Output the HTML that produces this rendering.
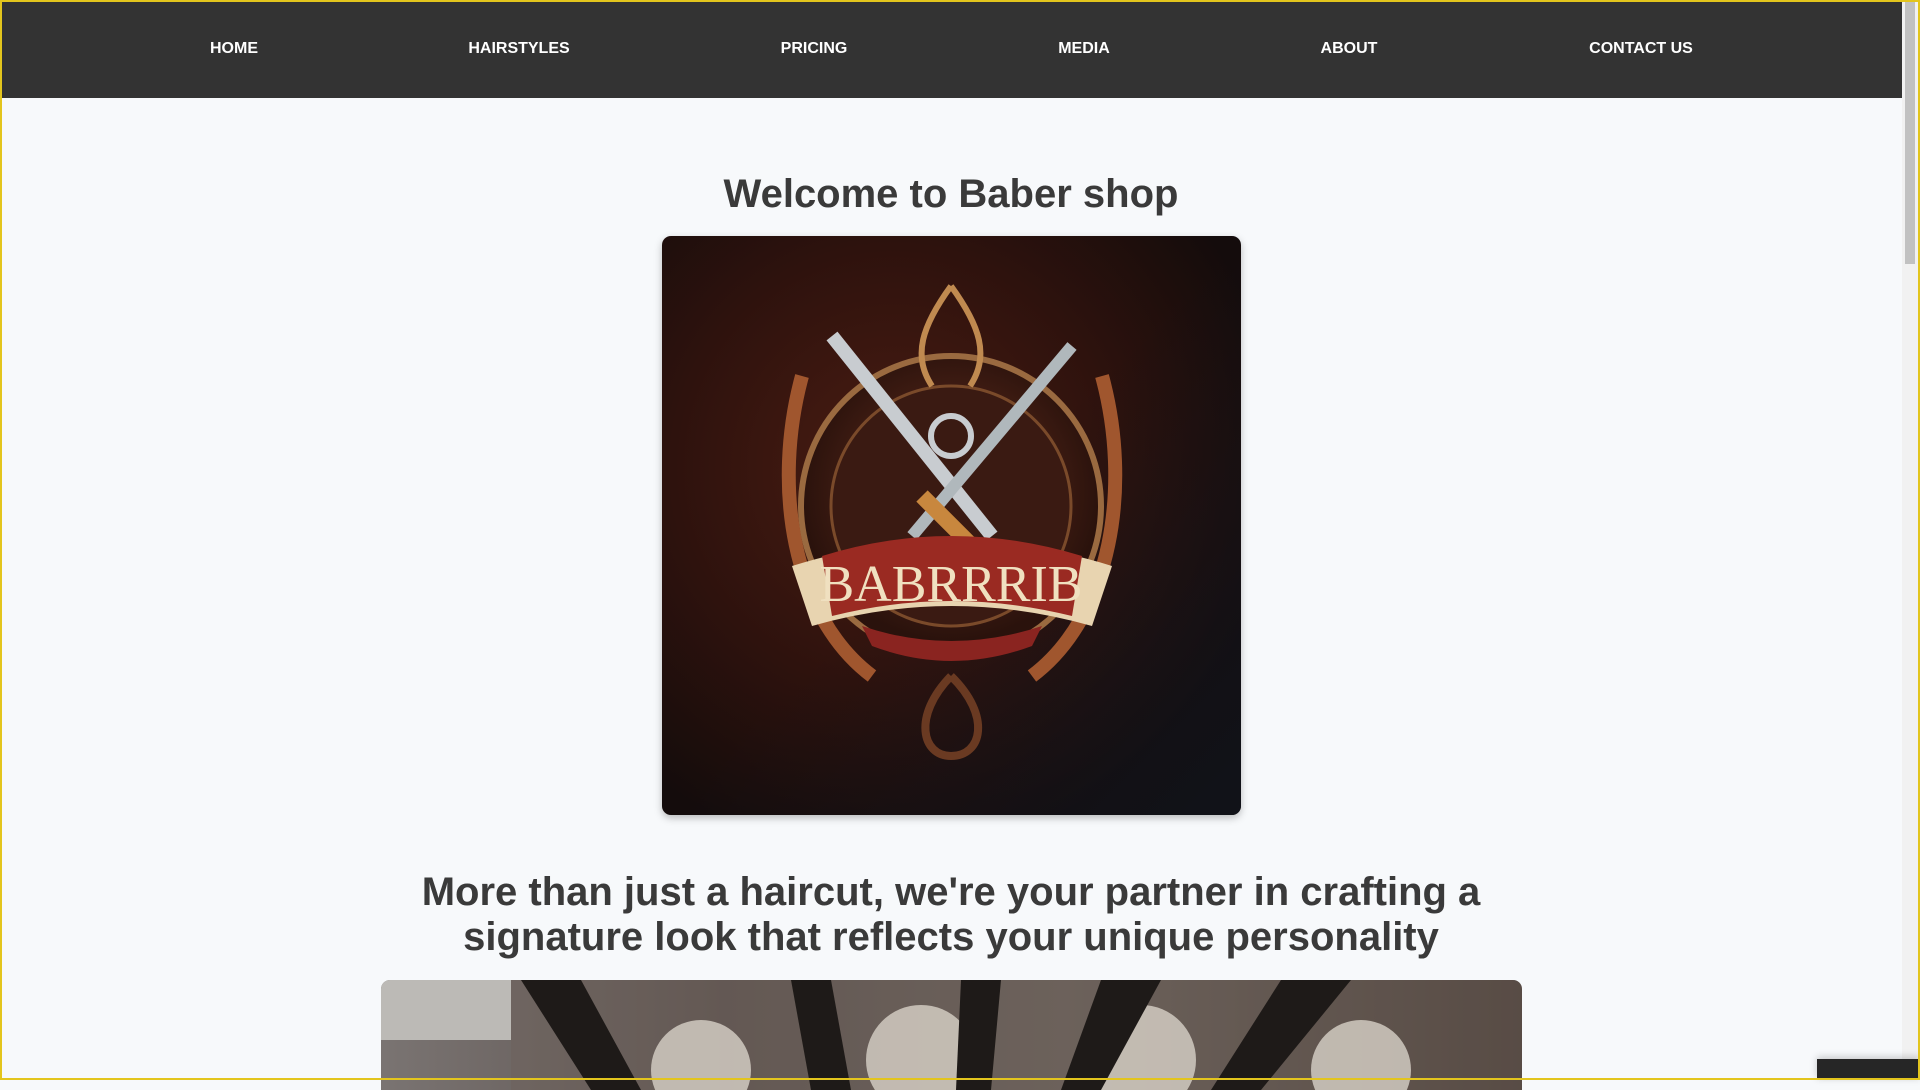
<!DOCTYPE html>
<html><head><meta charset="utf-8"><style>
*{margin:0;padding:0;box-sizing:border-box}
html,body{width:1920px;height:1080px;overflow:hidden;background:#f7f9fb;font-family:"Liberation Sans",Arial,sans-serif}
.frame{position:absolute;inset:0;border:2px solid #e3c51d;pointer-events:none;z-index:10}
nav{position:absolute;left:2px;top:2px;width:1900px;height:96px;background:#333}
nav a{position:absolute;top:38px;color:#fff;font-weight:bold;font-size:16px;text-decoration:none;transform:translateX(-50%);white-space:nowrap}
.sb{position:absolute;right:2px;top:2px;width:16px;height:1076px;background:#f1f1f1}
.sb div{position:absolute;left:3px;top:0;width:10px;height:262px;background:#c1c1c1}
h1{position:absolute;left:0;width:1902px;top:172px;text-align:center;color:#3a3a3a;font-size:40px;font-weight:bold}
h2{position:absolute;left:380px;width:1142px;top:870px;text-align:center;color:#3a3a3a;font-size:40px;line-height:45px;font-weight:bold}
.img1{position:absolute;left:662px;top:236px;width:579px;height:579px;border-radius:9px;overflow:hidden;box-shadow:0 3px 8px rgba(0,0,0,.25);background:radial-gradient(circle at 40% 40%,#4a1c12 0%,#2e120d 45%,#140c0c 80%),#1a0e0e}
.img2{position:absolute;left:381px;top:980px;width:1141px;height:110px;border-radius:9px 9px 0 0;overflow:hidden;background:linear-gradient(90deg,#7a7472,#5d5350 30%,#6b625c 60%,#4a3e38)}
.dk{position:absolute;left:1817px;top:1059px;width:103px;height:21px;background:#262626;box-shadow:0 -2px 8px rgba(0,0,0,.2)}
</style></head><body>
<nav>
<a style="left:232px">HOME</a><a style="left:517px">HAIRSTYLES</a><a style="left:812px">PRICING</a><a style="left:1082px">MEDIA</a><a style="left:1347px">ABOUT</a><a style="left:1639px">CONTACT US</a>
</nav>
<h1>Welcome to Baber shop</h1>
<div class="img1">
<svg width="579" height="579" viewBox="0 0 579 579">
<defs><radialGradient id="g" cx="50%" cy="45%" r="50%"><stop offset="0" stop-color="#6a3020"/><stop offset="1" stop-color="#2a120c"/></radialGradient>
<linearGradient id="d" x1="0" y1="0" x2="1" y2="1"><stop offset=".5" stop-color="#10141c" stop-opacity="0"/><stop offset="1" stop-color="#10141c" stop-opacity=".8"/></linearGradient></defs>
<rect width="579" height="579" fill="url(#d)"/>
<circle cx="289" cy="270" r="150" fill="url(#g)" stroke="#9a6a40" stroke-width="6"/>
<circle cx="289" cy="270" r="120" fill="#3a1a12" stroke="#7a4a2a" stroke-width="3"/>
<path d="M140 140 C110 250 130 380 210 440" stroke="#a0562e" stroke-width="14" fill="none"/>
<path d="M440 140 C470 250 450 380 370 440" stroke="#a0562e" stroke-width="14" fill="none"/>
<path d="M289 50 C260 90 250 120 270 150 M289 50 C318 90 328 120 308 150" stroke="#c08a50" stroke-width="6" fill="none"/>
<path d="M170 100 L330 300" stroke="#c8ccd0" stroke-width="14"/>
<path d="M410 110 L250 300" stroke="#b0b8bc" stroke-width="12"/>
<path d="M260 260 L330 330" stroke="#c8873e" stroke-width="16"/>
<circle cx="289" cy="200" r="20" fill="none" stroke="#c8ccd0" stroke-width="6"/>
<path d="M130 330 Q289 280 450 330 L430 390 Q289 350 150 390Z" fill="#e8d4b0"/>
<path d="M160 320 Q289 280 420 320 L410 380 Q289 350 170 380Z" fill="#9a2a22"/>
<text x="289" y="365" text-anchor="middle" font-family="Liberation Serif" font-size="52" fill="#f0e0c0">BABRRRIB</text>
<path d="M200 390 Q289 420 380 390 L370 410 Q289 440 210 410Z" fill="#8a2420"/>
<path d="M289 440 C250 480 260 520 289 520 C320 520 330 480 289 440" stroke="#6a3a22" stroke-width="8" fill="none"/>
</svg>
</div>
<h2>More than just a haircut, we're your partner in crafting a signature look that reflects your unique personality</h2>
<div class="img2">
<svg width="1141" height="110" viewBox="0 0 1141 110">
<rect x="0" y="0" width="130" height="60" fill="#bcbab6"/>
<path d="M130 0 L1141 0 L1141 110 L130 110Z" fill="#6e625a" opacity=".4"/>
<g fill="#d8d2c8" opacity=".8"><circle cx="320" cy="90" r="50"/><circle cx="540" cy="80" r="55"/><circle cx="760" cy="80" r="55"/><circle cx="980" cy="90" r="50"/></g>
<g fill="#1e1a18"><path d="M140 0 L200 0 L260 110 L210 110Z"/><path d="M410 0 L450 0 L470 110 L430 110Z"/><path d="M580 0 L620 0 L610 110 L575 110Z"/><path d="M720 0 L780 0 L720 110 L680 110Z"/><path d="M900 0 L970 0 L880 110 L830 110Z"/></g>
</svg>
</div>
<div class="sb"><div></div></div>
<div class="dk"></div>
<div class="frame"></div>
</body></html>
